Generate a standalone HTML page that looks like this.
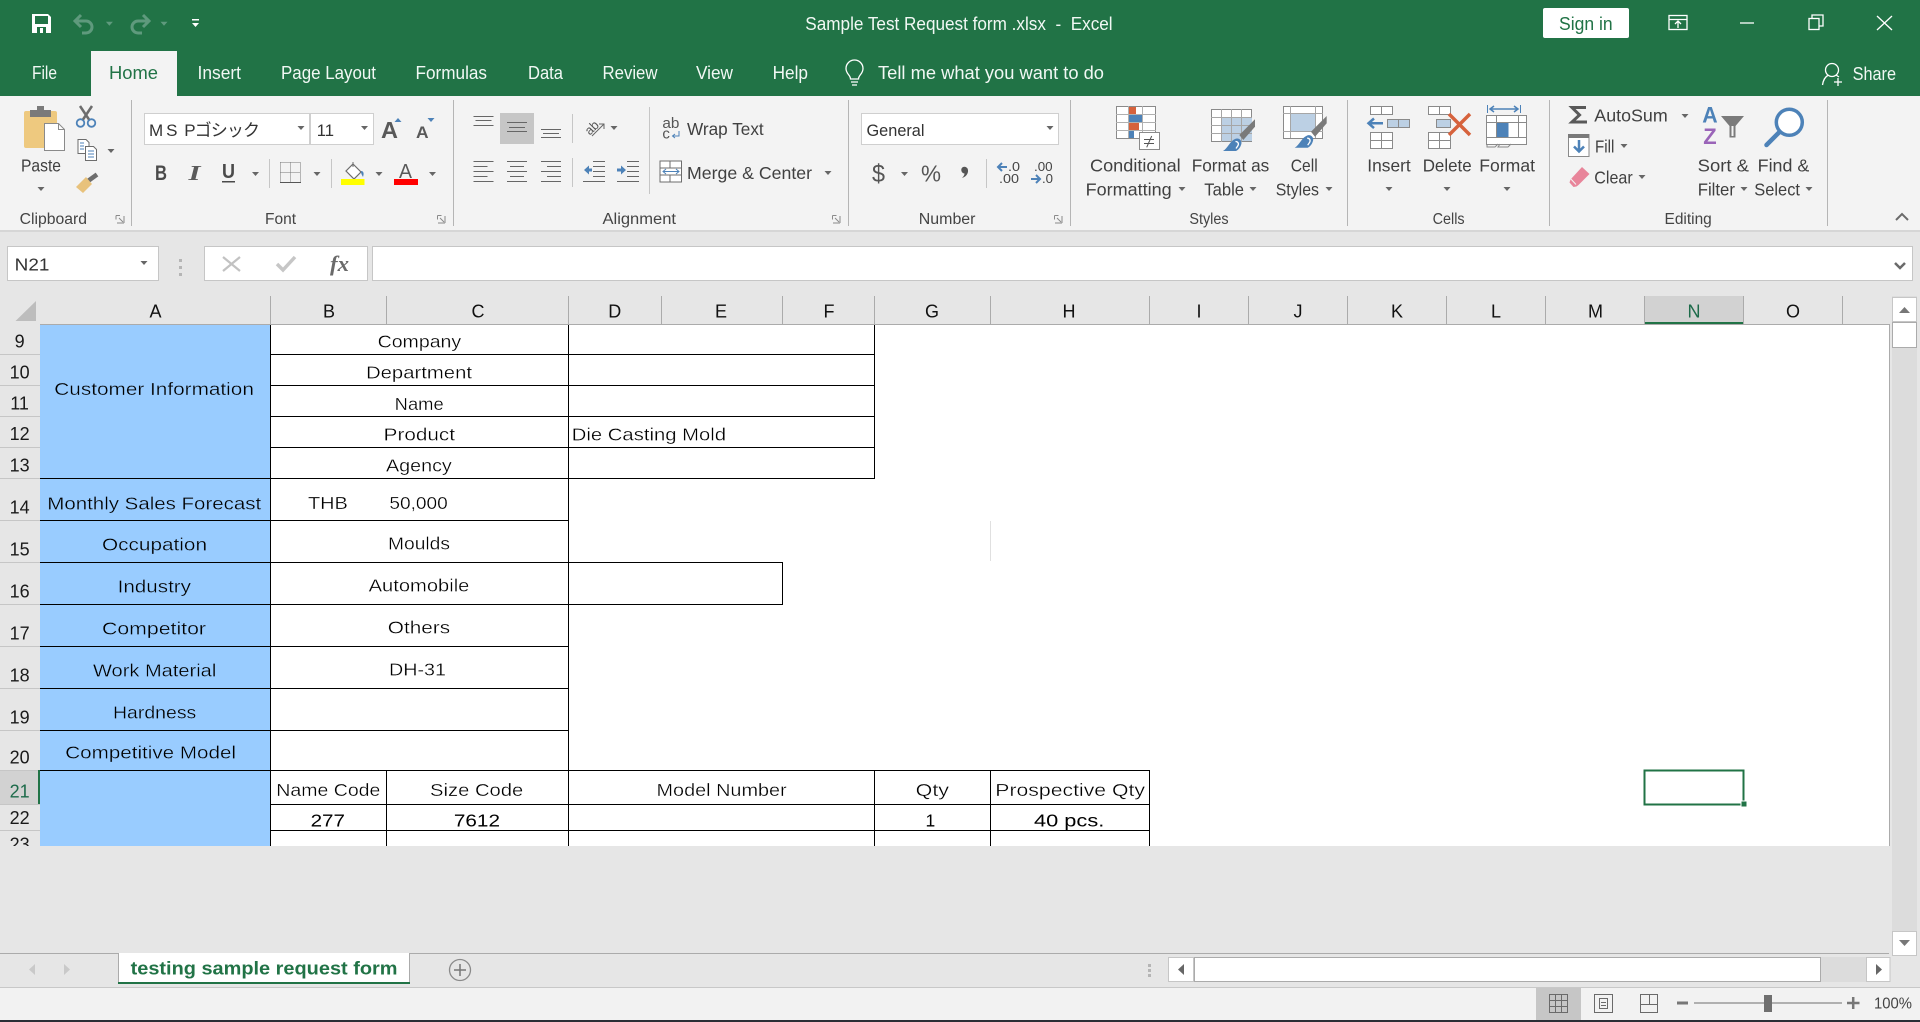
<!DOCTYPE html>
<html><head><meta charset="utf-8"><title>Sample Test Request form .xlsx - Excel</title>
<style>
html,body{margin:0;padding:0;width:1920px;height:1022px;overflow:hidden;background:#e6e6e6}
svg{display:block;font-family:"Liberation Sans","Noto Sans CJK JP",sans-serif}
text{white-space:pre}
.r{font-size:17.5px;fill:#404040}
.g{font-size:15.5px;fill:#444}
.tb{font-size:18px;fill:#f1f8f4}
.h{font-size:18px;fill:#111;text-anchor:middle}
.n{font-size:18px;fill:#1a1a1a}
.c{font-size:17.5px;fill:#000;stroke:#fff;stroke-width:.3}
.b{stroke:#99ccff}
.d{font-size:17.5px;fill:#000}
.l{shape-rendering:crispEdges;stroke-width:1;fill:none}
</style></head><body>
<svg width="1920" height="1022" viewBox="0 0 1920 1022" xmlns="http://www.w3.org/2000/svg">
<rect width="1920" height="1022" fill="#e6e6e6"/>
<rect width="1920" height="96" fill="#217346"/>
<rect x="91" y="51" width="86" height="45" fill="#f3f3f3"/>
<rect y="96" width="1920" height="134" fill="#f3f3f3"/>
<rect y="230" width="1920" height="2" fill="#d6d6d6"/>

<!-- Title bar -->
<path d="M32 14h16l3 3v16H32z" fill="#fff"/><rect x="35" y="16" width="13" height="8" fill="#217346"/><rect x="37" y="27" width="9" height="6" fill="#217346"/><rect x="40" y="28" width="3" height="5" fill="#fff"/>
<g fill="none" stroke="#5f9a7d" stroke-width="3"><path d="M81 15l-6 6 6 6"/><path d="M75 21h11a6 6 0 0 1 0 12h-4"/><path d="M143 15l6 6-6 6"/><path d="M149 21h-11a6 6 0 0 0 0 12h4"/></g>
<path d="M105.900 21.700h7l-3.500 4zM160.500 21.700h7l-3.500 4z" fill="#5f9a7d"/>
<path d="M192 19h7v1.500h-7zM192 23h7l-3.500 4z" fill="#fff"/>
<text x="805.300" y="30" class="tb" textLength="307.300" lengthAdjust="spacingAndGlyphs">Sample Test Request form .xlsx  -  Excel</text>
<rect x="1543" y="8" width="86" height="30" rx="2" fill="#fff"/>
<text x="1559" y="30" font-size="18" fill="#217346" textLength="53.600" lengthAdjust="spacingAndGlyphs">Sign in</text>
<g fill="none" stroke="#fff" stroke-width="1.300"><rect x="1669" y="15.500" width="18" height="14"/><path d="M1669 19.500h18M1678 28v-7M1675 24l3-3 3 3"/><path d="M1740 23h14"/><rect x="1809" y="18.500" width="10" height="11"/><path d="M1812 18v-3h11v11h-4"/><path d="M1877 16l15 14M1892 16l-15 14"/>
<circle cx="1832" cy="70" r="6.500"/><path d="M1822.500 85c1-7 4-9 6-10M1836 75l3 2M1838 78v8M1834 82h8"/></g>

<!-- Tabs -->
<text x="32" y="79" class="tb" textLength="25" lengthAdjust="spacingAndGlyphs">File</text>
<text x="109" y="79" class="tb" style="fill:#217346" textLength="49" lengthAdjust="spacingAndGlyphs">Home</text>
<text x="197.500" y="79" class="tb" textLength="43.500" lengthAdjust="spacingAndGlyphs">Insert</text>
<text x="281" y="79" class="tb" textLength="95" lengthAdjust="spacingAndGlyphs">Page Layout</text>
<text x="415.500" y="79" class="tb" textLength="71.500" lengthAdjust="spacingAndGlyphs">Formulas</text>
<text x="528" y="79" class="tb" textLength="35" lengthAdjust="spacingAndGlyphs">Data</text>
<text x="602.500" y="79" class="tb" textLength="55" lengthAdjust="spacingAndGlyphs">Review</text>
<text x="696" y="79" class="tb" textLength="37" lengthAdjust="spacingAndGlyphs">View</text>
<text x="772.600" y="79" class="tb" textLength="35.400" lengthAdjust="spacingAndGlyphs">Help</text>
<path d="M850.500 79c0-4-4.500-5-4.500-10.500a8.500 8.500 0 0 1 17 0c0 5.500-4.500 6.500-4.500 10.500zM851 82h7M852 85h5" fill="none" stroke="#fff" stroke-width="1.300"/>
<text x="878" y="79" class="tb" textLength="226" lengthAdjust="spacingAndGlyphs">Tell me what you want to do</text>
<text x="1852.600" y="80" class="tb" textLength="43.400" lengthAdjust="spacingAndGlyphs">Share</text>

<!-- Group separators -->
<path class="l" stroke="#b5b5b5" d="M131.500 100V226M453.500 100V226M848.500 100V226M1070.500 100V226M1347.500 100V226M1549.500 100V226M1827.500 100V226"/>
<path class="l" stroke="#c6c6c6" d="M269.500 159V188M331.500 159V188M572.500 114V143M572.500 158V187M649.500 107V194M986.500 159V188"/>

<!-- Group labels -->
<text x="19.600" y="224" class="g" textLength="67.400" lengthAdjust="spacingAndGlyphs">Clipboard</text>
<text x="265" y="224" class="g" textLength="31" lengthAdjust="spacingAndGlyphs">Font</text>
<text x="602.500" y="224" class="g" textLength="73.500" lengthAdjust="spacingAndGlyphs">Alignment</text>
<text x="918.800" y="224" class="g" textLength="56.700" lengthAdjust="spacingAndGlyphs">Number</text>
<text x="1189.400" y="224" class="g" textLength="39.200" lengthAdjust="spacingAndGlyphs">Styles</text>
<text x="1432.600" y="224" class="g" textLength="32" lengthAdjust="spacingAndGlyphs">Cells</text>
<text x="1664.500" y="224" class="g" textLength="47.300" lengthAdjust="spacingAndGlyphs">Editing</text>
<g fill="none" stroke="#8a8a8a"><path d="M116 215.500h4M116 215.500v4M117 223h7M124 223v-7M119 218l4 4M437.500 215.500h4M437.500 215.500v4M438 223h7M445 223v-7M440 218l4 4M832.500 215.500h4M832.500 215.500v4M833 223h7M840 223v-7M835 218l4 4M1054.500 215.500h4M1054.500 215.500v4M1055 223h7M1062 223v-7M1057 218l4 4"/></g>

<!-- Clipboard -->
<rect x="24" y="111" width="33" height="37" rx="2" fill="#eec97f"/>
<rect x="30" y="110" width="21" height="7" fill="#7a7a7a"/><rect x="37" y="106" width="7" height="5" fill="#7a7a7a"/>
<path d="M44.500 123.500h14l6 6v21h-20z" fill="#fff" stroke="#8a8a8a"/><path d="M58.500 123.500v6h6" fill="none" stroke="#8a8a8a"/>
<text x="21" y="171.700" class="r" textLength="40" lengthAdjust="spacingAndGlyphs">Paste</text>
<circle cx="80.500" cy="123" r="3.800" fill="none" stroke="#4d82b8" stroke-width="1.800"/><circle cx="91.500" cy="123" r="3.800" fill="none" stroke="#4d82b8" stroke-width="1.800"/>
<path d="M83 119.500L92 106M89 119.500L80 106" stroke="#6d6d6d" stroke-width="2.500" fill="none"/>
<path d="M78 139.500h8l3 3v11H78z" fill="#fff" stroke="#6d6d6d"/><path d="M85.500 146.500h8l3 3v11H85.500z" fill="#fff" stroke="#6d6d6d"/><path d="M88 151h6M88 154h6M88 157h6M80 143h4M80 146h4M80 149h4" stroke="#4d82b8" fill="none"/>
<path d="M97 174.500l-9 6.500" stroke="#6d6d6d" stroke-width="4.500" fill="none"/><path d="M76 187l10-10 6 7-9 9z" fill="#e8c27c"/>

<!-- Font -->
<rect x="144.500" y="113.500" width="165" height="31" fill="#fff" stroke="#cfcfcf"/>
<rect x="310.500" y="113.500" width="63" height="31" fill="#fff" stroke="#cfcfcf"/>
<text x="149" y="136" font-size="17" fill="#333" textLength="111" lengthAdjust="spacing">M S  Pゴシック</text>
<text x="316.700" y="136" font-size="17" fill="#333" textLength="17.300" lengthAdjust="spacingAndGlyphs">11</text>
<text x="381" y="138" font-size="23" font-weight="bold" fill="#595959" textLength="17" lengthAdjust="spacingAndGlyphs">A</text>
<path d="M394.500 122l3.500-4 3.500 4z" fill="#4d82b8"/>
<text x="416" y="138" font-size="17" font-weight="bold" fill="#595959" textLength="12.600" lengthAdjust="spacingAndGlyphs">A</text>
<path d="M427.500 118h7l-3.500 4z" fill="#4d82b8"/>
<text x="155" y="180" font-size="21" font-weight="bold" fill="#4a4a4a" textLength="12" lengthAdjust="spacingAndGlyphs">B</text>
<text x="188.500" y="180" font-size="21" font-weight="bold" font-style="italic" font-family="Liberation Serif" fill="#5a5a5a" textLength="12" lengthAdjust="spacingAndGlyphs">I</text>
<text x="222" y="178" font-size="20" font-weight="bold" fill="#4a4a4a" textLength="13" lengthAdjust="spacingAndGlyphs">U</text>
<rect x="222" y="181" width="13" height="1.500" fill="#4a4a4a"/>
<path class="l" stroke="#777" stroke-dasharray="1 1" d="M280.500 162.500h20M280.500 172.500h20M280.500 162.500v20M290.500 162.500v20M300.500 162.500v20"/><path class="l" stroke="#555" d="M280 182.500h21"/>
<path d="M353 164l8 8-7 7-8-8z" fill="#fff" stroke="#6d6d6d" stroke-width="1.200"/><path d="M353 162v5" stroke="#6d6d6d" fill="none"/><path d="M361 171c3 0 3 3 2 6-1-2-2-3-2-6z" fill="#4d82b8"/>
<rect x="341" y="179" width="23.500" height="6" fill="#ffff00"/>
<text x="399" y="178" font-size="20" fill="#595959" textLength="13" lengthAdjust="spacingAndGlyphs">A</text>
<rect x="394" y="179" width="24" height="6" fill="#ff0000"/>

<!-- Alignment -->
<rect x="500" y="113" width="34" height="31" fill="#c6c6c6"/>
<path class="l" stroke="#666" d="M473.500 116.500h20M475.500 120.500h16M473.500 125.500h20M507 122.500h20M509 127.500h16M507 131.500h20M541 129.500h20M543 133.500h16M541 137.500h20
M473.500 161.500h20M473.500 166.500h14M473.500 171.500h20M473.500 176.500h14M473.500 181.500h20
M507 161.500h20M510 166.500h14M507 171.500h20M510 176.500h14M507 181.500h20
M541 161.500h20M547 166.500h14M541 171.500h20M547 176.500h14M541 181.500h20
M593 161.500h12M593 166.500h12M593 171.500h12M593 176.500h12M583 181.500h22M627 161.500h12M627 166.500h12M627 171.500h12M627 176.500h12M617 181.500h22"/>
<path d="M584 170l5-4.500v3h3v3h-3v3zM626 170l-5-4.500v3h-4v3h4v3z" fill="#4d82b8"/>
<text x="585" y="132" font-size="13" fill="#555" transform="rotate(-45 592 128)" textLength="14" lengthAdjust="spacingAndGlyphs">ab</text>
<path d="M592 136l12-12M599 124h5v5" stroke="#666" fill="none"/>
<text x="662.400" y="128" font-size="15" fill="#555" textLength="17" lengthAdjust="spacingAndGlyphs">ab</text>
<text x="662.400" y="138.500" font-size="15" fill="#555">c</text>
<path d="M679 131v5h-6M675 134l-2.500 2 2.500 2" stroke="#4d82b8" fill="none"/>
<text x="687" y="135" class="r" textLength="76.700" lengthAdjust="spacingAndGlyphs">Wrap Text</text>
<path d="M660 161h21.500v21H660zM660 168h21.500M660 175h21.500M670 161v7M670 175v7" stroke="#6d6d6d" fill="#fff"/>
<path d="M663 171.500h16M666 169l-3 2.500 3 2.500M676 169l3 2.500-3 2.500" stroke="#4d82b8" fill="none"/>
<text x="687" y="179" class="r" textLength="125" lengthAdjust="spacingAndGlyphs">Merge &amp; Center</text>

<!-- Number -->
<rect x="861.500" y="113.500" width="197" height="31" fill="#fff" stroke="#cfcfcf"/>
<text x="866.500" y="136" font-size="17" fill="#333" textLength="58" lengthAdjust="spacingAndGlyphs">General</text>
<text x="872" y="182" font-size="25" fill="#555" textLength="13" lengthAdjust="spacingAndGlyphs">$</text>
<text x="921" y="181.700" font-size="23" fill="#555" textLength="20" lengthAdjust="spacingAndGlyphs">%</text>
<path d="M963 167a3.700 3.700 0 0 1 5 3c.5 4-2.500 7-6 8 1.500-1.500 2.500-3 2.500-4.500a3.500 3.500 0 0 1-1.500-6.500z" fill="#555"/>
<text x="1008" y="171" font-size="13" fill="#444" textLength="12" lengthAdjust="spacingAndGlyphs">.0</text>
<text x="999" y="183" font-size="13" fill="#444" textLength="20" lengthAdjust="spacingAndGlyphs">.00</text>
<path d="M998 167h9M1002 163l-4 4 4 4" stroke="#4d82b8" stroke-width="2" fill="none"/>
<text x="1034" y="171" font-size="13" fill="#444" textLength="18.600" lengthAdjust="spacingAndGlyphs">.00</text>
<text x="1042" y="183" font-size="13" fill="#444" textLength="11" lengthAdjust="spacingAndGlyphs">.0</text>
<path d="M1031 179h9M1036 175l4 4-4 4" stroke="#4d82b8" stroke-width="2" fill="none"/>

<!-- Styles -->
<g shape-rendering="crispEdges">
<rect x="1116.500" y="106.500" width="39" height="32" fill="#fff" stroke="#8a8a8a"/>
<path d="M1116 114.500h40M1116 122.500h40M1116 130.500h40M1128.500 106v32M1142.500 106v32" stroke="#b0b0b0"/>
<rect x="1129" y="107" width="7" height="7" fill="#d6623c"/><rect x="1129" y="115" width="13" height="7" fill="#4d82b8"/><rect x="1129" y="123" width="10" height="7" fill="#d6623c"/><rect x="1129" y="131" width="5" height="7" fill="#4d82b8"/>
<rect x="1139.500" y="132.500" width="20" height="17" fill="#fff" stroke="#8a8a8a"/>
<rect x="1211.500" y="109.500" width="40" height="32" fill="#fff" stroke="#8a8a8a"/>
<rect x="1222" y="118" width="30" height="23" fill="#bcd0e4"/>
<path d="M1211 117.500h41M1211 125.500h41M1211 133.500h41M1221.500 109v33M1231.500 109v33M1241.500 109v33" stroke="#a6a6a6"/>
<rect x="1283.500" y="106.500" width="39" height="32" fill="#fff" stroke="#8a8a8a"/>
<rect x="1291" y="113" width="25" height="19" fill="#bcd0e4"/>
<path d="M1283 113.500h40M1283 131.500h40M1290.500 106v32M1315.500 106v32" stroke="#a6a6a6"/>
</g>
<path d="M1144 139.500h10M1144 143.500h10M1146.700 147.300l5-11.300" stroke="#555" fill="none"/>
<path d="M1255 119.300v7.400L1243.300 140l-4-5z" fill="#7a7a7a"/>
<path d="M1223 151c5-3 7-10 12-12 4-2 8 2 6 6-1 3-3 5-5 6z" fill="#4d82b8"/><path d="M1235.500 141.500c2.500 0 3.500 2 2.500 4l-2 3" stroke="#fff" stroke-width="1.300" fill="none"/>
<path d="M1326.700 116v7.300L1315 136.700l-4-5z" fill="#7a7a7a"/>
<path d="M1294.700 147.700c5-3 7-10 12-12 4-2 8 2 6 6-1 3-3 5-5 6z" fill="#4d82b8"/><path d="M1307.200 138.200c2.500 0 3.500 2 2.500 4l-2 3" stroke="#fff" stroke-width="1.300" fill="none"/>
<text x="1090" y="171.700" class="r" textLength="90.700" lengthAdjust="spacingAndGlyphs">Conditional</text>
<text x="1085.700" y="195.700" class="r" textLength="86" lengthAdjust="spacingAndGlyphs">Formatting</text>
<text x="1191.700" y="171.700" class="r" textLength="77.600" lengthAdjust="spacingAndGlyphs">Format as</text>
<text x="1204.300" y="195.700" class="r" textLength="39.700" lengthAdjust="spacingAndGlyphs">Table</text>
<text x="1290.700" y="171.700" class="r" textLength="27" lengthAdjust="spacingAndGlyphs">Cell</text>
<text x="1275.700" y="195.700" class="r" textLength="43.300" lengthAdjust="spacingAndGlyphs">Styles</text>

<!-- Cells -->
<g shape-rendering="crispEdges" stroke="#8a8a8a" fill="#fff">
<path d="M1370.500 106.500h22v8h-22zM1381.500 106.500v8M1370.500 132.500h22v16h-22zM1370.500 140.500h22M1381.500 132.500v16"/>
<path d="M1387.500 119.500h22v8h-22zM1398.500 119.500v8" fill="#bcd0e4"/>
<path d="M1428.500 106.500h22v8h-22zM1439.500 106.500v8M1428.500 132.500h22v16h-22zM1428.500 140.500h22M1439.500 132.500v16"/>
<path d="M1436.500 119.500h14v8h-14z" fill="#bcd0e4"/>
<path d="M1486.500 115.500h40v29h-40zM1486.500 122.500h40M1486.500 137.500h40M1496.500 115v22M1518.500 115v22"/>
</g>
<path d="M1370 123.300h13M1374 118.500l-5.500 4.800 5.500 4.800" stroke="#4d82b8" stroke-width="2.500" fill="none"/>
<path d="M1449 114l21 21M1470 114l-21 21" stroke="#d6623c" stroke-width="3.500" fill="none"/>
<rect x="1497" y="123" width="11.500" height="14" fill="#4d82b8"/>
<path d="M1490 109h28M1494 106l-4 3 4 3M1514 106l4 3-4 3" stroke="#4d82b8" stroke-width="1.500" fill="none"/>
<path d="M1487.500 105v8M1520.500 105v8" stroke="#4d82b8" fill="none"/>
<path d="M1487 144v3h8l3-3M1500 144l-2 3h10l3-3" stroke="#8a8a8a" fill="none"/>
<text x="1367.300" y="171.700" class="r" textLength="43.400" lengthAdjust="spacingAndGlyphs">Insert</text>
<text x="1422.700" y="171.700" class="r" textLength="49" lengthAdjust="spacingAndGlyphs">Delete</text>
<text x="1479.300" y="171.700" class="r" textLength="55.700" lengthAdjust="spacingAndGlyphs">Format</text>

<!-- Editing -->
<path d="M1586 107.500h-14l7.500 7.500-7.500 7h15" stroke="#595959" stroke-width="3" fill="none"/>
<text x="1594.300" y="121.700" class="r" textLength="73.400" lengthAdjust="spacingAndGlyphs">AutoSum</text>
<rect x="1568.500" y="134.500" width="20.500" height="22" fill="#fff" stroke="#8a8a8a"/><rect x="1568" y="134" width="21" height="4" fill="#7a7a7a"/>
<path d="M1579 140v11M1574 146.500l5 5 5-5" stroke="#4d82b8" stroke-width="2.500" fill="none"/>
<text x="1595" y="152.300" class="r" textLength="19.300" lengthAdjust="spacingAndGlyphs">Fill</text>
<path d="M1582 167l7.500 7-11 11-2 1.500-3 .5-4-4.500 1-3z" fill="#e8859a"/><path d="M1570 178l6 6.500" stroke="#f3f3f3" fill="none"/>
<text x="1594.300" y="183.300" class="r" textLength="38.400" lengthAdjust="spacingAndGlyphs">Clear</text>
<text x="1702.300" y="122.700" font-size="22" font-weight="bold" fill="#4d82b8" textLength="15.400" lengthAdjust="spacingAndGlyphs">A</text>
<text x="1703.300" y="144" font-size="22" font-weight="bold" fill="#9a64b8" textLength="13.400" lengthAdjust="spacingAndGlyphs">Z</text>
<path d="M1721 116h23l-8.500 10v11.500h-6V126z" fill="#7a7a7a"/><path d="M1731.500 126v10h2v-10z" fill="#f3f3f3"/>
<circle cx="1789.300" cy="122.300" r="13" fill="#fff" stroke="#4d82b8" stroke-width="3.500"/>
<path d="M1779.500 132l-13 13" stroke="#4d82b8" stroke-width="4.500" stroke-linecap="round" fill="none"/>
<text x="1697.700" y="171.700" class="r" textLength="51.300" lengthAdjust="spacingAndGlyphs">Sort &amp;</text>
<text x="1757.700" y="171.700" class="r" textLength="51.600" lengthAdjust="spacingAndGlyphs">Find &amp;</text>
<text x="1697.700" y="195.700" class="r" textLength="37.300" lengthAdjust="spacingAndGlyphs">Filter</text>
<text x="1754.300" y="195.700" class="r" textLength="45.700" lengthAdjust="spacingAndGlyphs">Select</text>
<path d="M1896 220l6-6 6 6" stroke="#6a6a6a" stroke-width="2" fill="none"/>

<!-- Formula bar -->
<rect x="7.500" y="246.500" width="151" height="34" fill="#fff" stroke="#c6c6c6"/>
<text x="14.700" y="270.700" font-size="17.500" fill="#333" textLength="34.700" lengthAdjust="spacingAndGlyphs">N21</text>
<path d="M179 259h3v3h-3zM179 266h3v3h-3zM179 273h3v3h-3z" fill="#b5b5b5"/>
<rect x="204.500" y="246.500" width="163" height="34" fill="#fff" stroke="#c6c6c6"/>
<path d="M223 257l17 14M240 257l-17 14" stroke="#c2c2c2" stroke-width="2.200" fill="none"/>
<path d="M277 264l6 6 12-13" stroke="#c6c6c6" stroke-width="3.500" fill="none"/>
<text x="330" y="271" font-size="22" font-style="italic" font-weight="bold" font-family="Liberation Serif" fill="#6a6a6a" textLength="19" lengthAdjust="spacingAndGlyphs">fx</text>
<rect x="372.500" y="246.500" width="1540" height="34" fill="#fff" stroke="#c6c6c6"/>
<path d="M1895 263l5 5 5-5" stroke="#6a6a6a" stroke-width="2.500" fill="none"/>

<!-- small gray arrows (drawn above the combo boxes) -->
<path fill="#666" d="M37.500 187h7l-3.500 4zM107.500 149h7l-3.500 4zM297.500 126h7l-3.500 4zM361 126h7l-3.500 4zM252 172h7l-3.500 4zM313.500 172h7l-3.500 4zM375.500 172h7l-3.500 4zM429 172h7l-3.500 4zM610.500 126h7l-3.500 4zM824.500 171h7l-3.500 4zM1046.500 126h7l-3.500 4zM901 172h7l-3.500 4zM1178.500 187h7l-3.500 4zM1249.500 187h7l-3.500 4zM1325.500 187h7l-3.500 4zM1385.500 187h7l-3.500 4zM1443.500 187h7l-3.500 4zM1503.500 187h7l-3.500 4zM1681.500 114h7l-3.500 4zM1620.500 144h7l-3.500 4zM1638.500 175h7l-3.500 4zM1740.500 187h7l-3.500 4zM1805.500 187h7l-3.500 4zM140.500 261h7l-3.500 4z"/>

<!-- Column headers -->
<path d="M15.500 321L36 301v20z" fill="#bdbdbd"/>
<rect x="1644" y="296" width="100" height="28" fill="#d2d2d2"/><rect x="1644" y="322" width="100" height="2" fill="#217346"/>
<path class="l" stroke="#ababab" d="M270.500 296V324M386.500 296V324M568.500 296V324M661.500 296V324M782.500 296V324M874.500 296V324M990.500 296V324M1149.500 296V324M1248.500 296V324M1347.500 296V324M1446.500 296V324M1545.500 296V324M1644.500 296V324M1743.500 296V324M1842.500 296V324"/>
<text x="155.500" y="317.300" class="h">A</text><text x="329" y="317.300" class="h">B</text><text x="478" y="317.300" class="h">C</text><text x="614.700" y="317.300" class="h">D</text><text x="721" y="317.300" class="h">E</text><text x="829" y="317.300" class="h">F</text><text x="932" y="317.300" class="h">G</text><text x="1069" y="317.300" class="h">H</text><text x="1199" y="317.300" class="h">I</text><text x="1298" y="317.300" class="h">J</text><text x="1397" y="317.300" class="h">K</text><text x="1496" y="317.300" class="h">L</text><text x="1595.500" y="317.300" class="h">M</text><text x="1694" y="317.300" class="h" style="fill:#1d6b4a">N</text><text x="1793" y="317.300" class="h">O</text>

<!-- Sheet area -->
<rect x="40" y="325" width="1849" height="521" fill="#fff"/>
<rect x="40" y="325" width="230" height="521" fill="#99ccff"/>
<path class="l" stroke="#ababab" d="M40 324.500H1889.500M1889.500 324V846"/>
<path class="l" stroke="#e0e0e0" d="M990.500 521V561"/>

<!-- Row headers -->
<rect x="0" y="770" width="39" height="34" fill="#d2d2d2"/><rect x="38" y="770" width="2" height="34" fill="#217346"/>
<path class="l" stroke="#c6c6c6" d="M0 354.500H40M0 385.500H40M0 416.500H40M0 447.500H40M0 478.500H40M0 520.500H40M0 562.500H40M0 604.500H40M0 646.500H40M0 688.500H40M0 730.500H40M0 830.500H40M0 804.500H40M0 770.500H38"/>
<g class="rows" text-anchor="middle">
<text x="19.600" y="347.300" class="n">9</text><text x="19.600" y="378.300" class="n">10</text><text x="19.600" y="409.300" class="n">11</text><text x="19.600" y="440" class="n">12</text><text x="19.600" y="471.300" class="n">13</text><text x="19.600" y="513.300" class="n">14</text><text x="19.600" y="555.300" class="n">15</text><text x="19.600" y="597.300" class="n">16</text><text x="19.600" y="639.300" class="n">17</text><text x="19.600" y="681.300" class="n">18</text><text x="19.600" y="723.300" class="n">19</text><text x="19.600" y="763.300" class="n">20</text><text x="19.600" y="797.300" class="n" style="fill:#1d6b4a">21</text><text x="19.600" y="824" class="n">22</text><text x="19.600" y="850.500" class="n">23</text>
</g>
<rect x="0" y="846" width="1889" height="20" fill="#e6e6e6"/>

<!-- Cell borders -->
<path class="l" stroke="#000" d="M270.500 325V846M568.500 325V846M874.500 325V478M270 354.500H875M270 385.500H875M270 416.500H875M270 447.500H875M40 478.500H875M40 520.500H569M40 562.500H783M40 604.500H783M782.500 562V604M40 646.500H569M40 688.500H569M40 730.500H569M40 770.500H1150M270 804.500H1150M270 830.500H1150M386.500 770V846M874.500 770V846M990.500 770V846M1149.500 770V846"/>

<!-- Cell text -->
<text x="54.300" y="395" class="c b" textLength="199.600" lengthAdjust="spacingAndGlyphs">Customer Information</text>
<text x="377.600" y="347.700" class="c" textLength="83.600" lengthAdjust="spacingAndGlyphs">Company</text>
<text x="366" y="378.700" class="c" textLength="106" lengthAdjust="spacingAndGlyphs">Department</text>
<text x="394.700" y="410" class="c" textLength="49" lengthAdjust="spacingAndGlyphs">Name</text>
<text x="383.700" y="440.700" class="c" textLength="71.300" lengthAdjust="spacingAndGlyphs">Product</text>
<text x="386" y="471.700" class="c" textLength="65.800" lengthAdjust="spacingAndGlyphs">Agency</text>
<text x="571.800" y="440.700" class="c" textLength="154.200" lengthAdjust="spacingAndGlyphs">Die Casting Mold</text>
<text x="47.300" y="509.300" class="c b" textLength="213.900" lengthAdjust="spacingAndGlyphs">Monthly Sales Forecast</text>
<text x="308" y="509" class="c" textLength="39.800" lengthAdjust="spacingAndGlyphs">THB</text>
<text x="389.400" y="509" class="c" textLength="58.400" lengthAdjust="spacingAndGlyphs">50,000</text>
<text x="102" y="550.300" class="c b" textLength="105" lengthAdjust="spacingAndGlyphs">Occupation</text>
<text x="388" y="549.700" class="c" textLength="62" lengthAdjust="spacingAndGlyphs">Moulds</text>
<text x="117.600" y="592.300" class="c b" textLength="73.400" lengthAdjust="spacingAndGlyphs">Industry</text>
<text x="368.600" y="591.700" class="c" textLength="100.800" lengthAdjust="spacingAndGlyphs">Automobile</text>
<text x="102" y="634.300" class="c b" textLength="104" lengthAdjust="spacingAndGlyphs">Competitor</text>
<text x="387.800" y="633.700" class="c" textLength="62.400" lengthAdjust="spacingAndGlyphs">Others</text>
<text x="93" y="676.300" class="c b" textLength="123.300" lengthAdjust="spacingAndGlyphs">Work Material</text>
<text x="389" y="675.700" class="c" textLength="57" lengthAdjust="spacingAndGlyphs">DH-31</text>
<text x="113" y="718.300" class="c b" textLength="83.300" lengthAdjust="spacingAndGlyphs">Hardness</text>
<text x="65.300" y="758.700" class="c b" textLength="170.700" lengthAdjust="spacingAndGlyphs">Competitive Model</text>
<text x="276.300" y="796" class="c" textLength="104.100" lengthAdjust="spacingAndGlyphs">Name Code</text>
<text x="430" y="796" class="c" textLength="93.300" lengthAdjust="spacingAndGlyphs">Size Code</text>
<text x="656.500" y="796" class="c" textLength="130.200" lengthAdjust="spacingAndGlyphs">Model Number</text>
<text x="915.700" y="796" class="c" textLength="33.300" lengthAdjust="spacingAndGlyphs">Qty</text>
<text x="995.300" y="796" class="c" textLength="149.700" lengthAdjust="spacingAndGlyphs">Prospective Qty</text>
<text x="310.600" y="826.700" class="d" textLength="34.400" lengthAdjust="spacingAndGlyphs">277</text>
<text x="453.900" y="826.700" class="d" textLength="46.100" lengthAdjust="spacingAndGlyphs">7612</text>
<text x="925.500" y="826.700" class="d">1</text>
<text x="1034" y="826.700" class="d" textLength="70.300" lengthAdjust="spacingAndGlyphs">40 pcs.</text>

<!-- Selected cell -->
<rect x="1644.500" y="770.500" width="99" height="34" fill="#fff" fill-opacity="0" stroke="#217346" stroke-width="2" shape-rendering="crispEdges"/>
<rect x="1741" y="801" width="6" height="6" fill="#217346" stroke="#fff"/>

<!-- Vertical scrollbar -->
<rect x="1892" y="296" width="25" height="659" fill="#dcdcdc"/>
<rect x="1892.500" y="297.500" width="24" height="24" fill="#fff" stroke="#c6c6c6"/><path d="M1899 313h11l-5.500-6z" fill="#777"/>
<rect x="1892.500" y="322.500" width="24" height="25" fill="#fff" stroke="#ababab"/>
<rect x="1892.500" y="931.500" width="24" height="24" fill="#fff" stroke="#c6c6c6"/><path d="M1899 940h11l-5.500 6z" fill="#777"/>

<!-- Sheet tabs -->
<path class="l" stroke="#ababab" d="M0 953.500H118M410 953.500H1889"/>
<path fill="#c9c9c9" d="M35 964v11l-6-5.500zM64 964v11l6-5.500z"/>
<rect x="118.500" y="953" width="291" height="30" fill="#fff"/>
<path class="l" stroke="#ababab" d="M118.500 953V983M409.500 953V983"/>
<rect x="118" y="982" width="292" height="2" fill="#217346"/>
<text x="130.600" y="974.300" font-size="18" font-weight="bold" fill="#217346" textLength="266.900" lengthAdjust="spacingAndGlyphs">testing sample request form</text>
<circle cx="460" cy="970" r="10.500" fill="none" stroke="#8a8a8a" stroke-width="1.300"/><path d="M454 970h12M460 964v12" stroke="#777" stroke-width="1.500" fill="none"/>
<path d="M1148 964h3v3h-3zM1148 969h3v3h-3zM1148 974h3v3h-3z" fill="#b5b5b5"/>
<rect x="1168" y="957" width="722" height="25" fill="#dcdcdc"/>
<rect x="1168.500" y="957.500" width="25" height="24" fill="#fff" stroke="#c6c6c6"/><path d="M1184 964v11l-6-5.500z" fill="#666"/>
<rect x="1194.500" y="957.500" width="626" height="24" fill="#fff" stroke="#ababab"/>
<rect x="1866.500" y="957.500" width="23.500" height="24" fill="#fff" stroke="#c6c6c6"/><path d="M1876 964v11l6-5.500z" fill="#666"/>

<!-- Status bar -->
<rect y="987" width="1920" height="33" fill="#f2f2f2"/>
<rect y="987" width="1920" height="1" fill="#c8c8c8"/>
<rect x="1536" y="988" width="45" height="32" fill="#c6c6c6"/>
<path class="l" stroke="#6a6a6a" d="M1549.500 994.500h18v18h-18zM1549.500 1000.500h18M1549.500 1006.500h18M1555.500 994.500v18M1561.500 994.500v18M1594.500 994.500h18v18h-18zM1599.500 998.500h8v10h-8zM1601 1002.500h5M1601 1005.500h5M1640.500 994.500h17v18h-17zM1640.500 1004.500h17M1649.500 994.500v10"/>
<rect x="1677" y="1001.500" width="11" height="3" fill="#777"/>
<rect x="1694" y="1002" width="148" height="2" fill="#b0b0b0"/>
<rect x="1764" y="995" width="8" height="17" fill="#6f6f6f"/>
<path d="M1847 1003h12.500M1853.200 997v12" stroke="#777" stroke-width="2.500" fill="none"/>
<text x="1874" y="1008.300" font-size="15.500" fill="#444" textLength="38" lengthAdjust="spacingAndGlyphs">100%</text>
<rect y="1020" width="1920" height="2" fill="#2a2d35"/>
</svg>
</body></html>
